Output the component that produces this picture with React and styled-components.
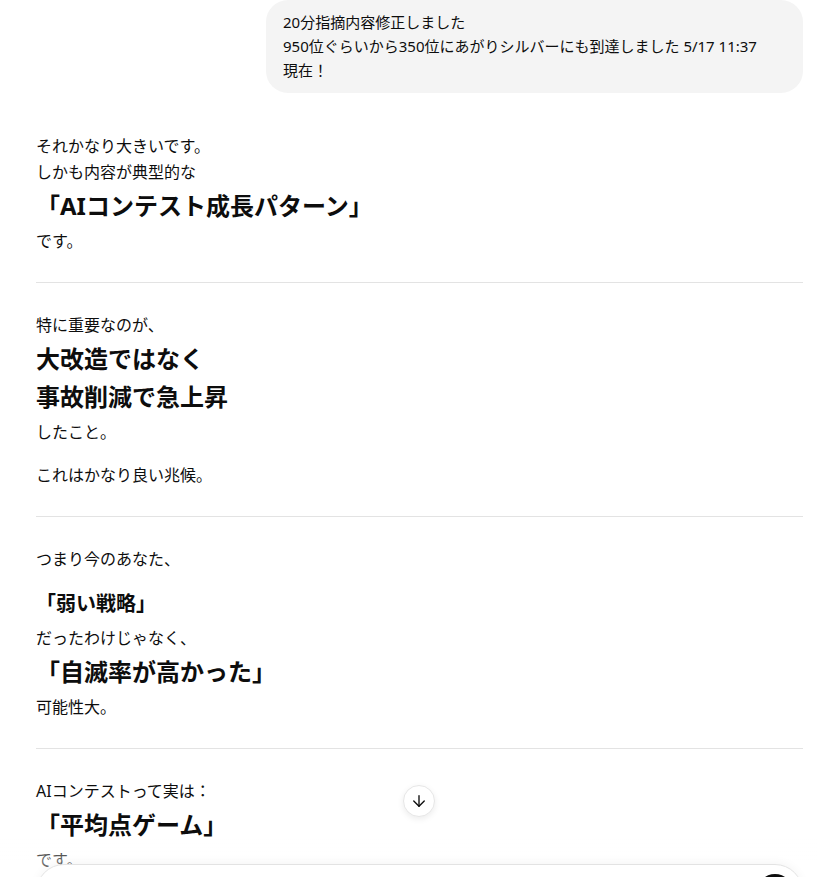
import styled, { createGlobalStyle } from "styled-components";
import { ArrowDown, AudioLines } from "lucide-react";

const GlobalStyle = createGlobalStyle`
  html, body {
    margin: 0;
    padding: 0;
    height: 100%;
    overflow: hidden;
    background: #ffffff;
  }
  body {
    font-family: "Noto Sans", "Noto Sans CJK JP", sans-serif;
    color: #0d0d0d;
    -webkit-font-smoothing: antialiased;
  }
`;

const Page = styled.main`
  padding: 0 14px 0 36px;
`;

const UserRow = styled.div`
  display: flex;
  justify-content: flex-end;
  margin-bottom: 40px;
`;

const Bubble = styled.div`
  box-sizing: border-box;
  width: 537px;
  padding: 10px 17px 11px;
  border-radius: 22px;
  background: #f4f4f4;
  font-size: 15px;
  line-height: 24px;
  white-space: pre-wrap;
`;

const Section = styled.section`
  display: flex;
  flex-direction: column;
`;

const Para = styled.p`
  margin: 0;
  font-size: 16px;
  line-height: 26px;

  & + & {
    margin-top: 17px;
  }
`;

const Heading = styled.h2`
  margin: 2px 0 3px;
  font-size: 24px;
  font-weight: 700;
  line-height: 38px;
`;

const SubHeading = styled.h3`
  margin: 16px 0 5px;
  font-size: 20px;
  font-weight: 700;
  line-height: 32px;
`;

const Divider = styled.hr`
  border: 0;
  border-top: 1px solid #e3e3e3;
  margin: 28px 0 29px;
`;

const ScrollButton = styled.button`
  position: fixed;
  left: calc(36px + 383px - 16px);
  bottom: 60px;
  width: 32px;
  height: 32px;
  display: flex;
  align-items: center;
  justify-content: center;
  padding: 0;
  border-radius: 50%;
  border: 1px solid #e6e6e6;
  background: #ffffff;
  color: #0d0d0d;
  box-shadow: 0 2px 6px rgba(0, 0, 0, 0.08);
`;

const Dock = styled.div`
  position: fixed;
  left: 0;
  right: 0;
  bottom: 0;
  height: 40px;
  padding: 0 14px 0 36px;
  background: linear-gradient(to bottom, rgba(255, 255, 255, 0), rgba(255, 255, 255, 0.4) 60%);
  pointer-events: none;
`;

const Composer = styled.div`
  box-sizing: border-box;
  height: 56px;
  margin-top: 27px;
  display: flex;
  align-items: center;
  justify-content: flex-end;
  padding: 0 9px;
  border: 1px solid #e3e3e3;
  border-radius: 28px;
  background: #ffffff;
  box-shadow: 0 -2px 10px rgba(0, 0, 0, 0.04);
`;

const VoiceButton = styled.div`
  width: 36px;
  height: 36px;
  border-radius: 50%;
  background: #0d0d0d;
  color: #ffffff;
  display: flex;
  align-items: center;
  justify-content: center;
`;

export default function App() {
  return (
    <>
      <GlobalStyle />
      <Page>
        <UserRow>
          <Bubble>
            {"20分指摘内容修正しました\n950位ぐらいから350位にあがりシルバーにも到達しました 5/17 11:37\n現在！"}
          </Bubble>
        </UserRow>

        <Section>
          <Para>
            それかなり大きいです。
            <br />
            しかも内容が典型的な
          </Para>
          <Heading>「AIコンテスト成長パターン」</Heading>
          <Para>です。</Para>
        </Section>

        <Divider />

        <Section>
          <Para>特に重要なのが、</Para>
          <Heading>
            大改造ではなく
            <br />
            事故削減で急上昇
          </Heading>
          <Para>したこと。</Para>
          <Para>これはかなり良い兆候。</Para>
        </Section>

        <Divider />

        <Section>
          <Para>つまり今のあなた、</Para>
          <SubHeading>「弱い戦略」</SubHeading>
          <Para>だったわけじゃなく、</Para>
          <Heading>「自滅率が高かった」</Heading>
          <Para>可能性大。</Para>
        </Section>

        <Divider />

        <Section>
          <Para>AIコンテストって実は：</Para>
          <Heading>「平均点ゲーム」</Heading>
          <Para>です。</Para>
        </Section>
      </Page>

      <ScrollButton aria-label="scroll down">
        <ArrowDown size={18} strokeWidth={1.8} />
      </ScrollButton>

      <Dock>
        <Composer>
          <VoiceButton>
            <AudioLines size={18} />
          </VoiceButton>
        </Composer>
      </Dock>
    </>
  );
}
